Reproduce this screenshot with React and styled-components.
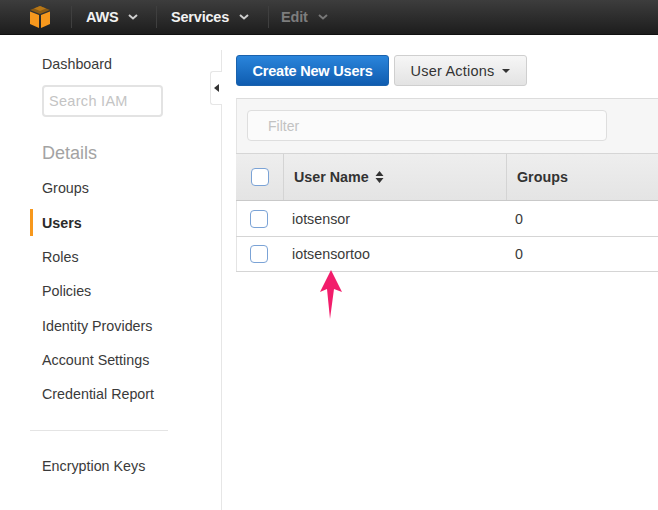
import React from "react";
import styled, { createGlobalStyle } from "styled-components";

const Global = createGlobalStyle`
  html, body { margin: 0; padding: 0; background: #fff; }
  body { font-family: "Liberation Sans", Arial, sans-serif; color: #333; overflow: hidden; }
`;

const Page = styled.div`
  width: 658px;
  height: 510px;
  overflow: hidden;
  display: flex;
  flex-direction: column;
`;

const TopBar = styled.header`
  height: 35px;
  flex: none;
  box-sizing: border-box;
  border-bottom: 1px solid #111;
  background: linear-gradient(#3d3d3d, #1d1d1d);
  display: flex;
  align-items: center;
  padding-left: 29px;
`;

const LogoBox = styled.div`
  width: 42px;
  display: flex;
  align-items: center;
`;

const Menu = styled.div`
  height: 22px;
  display: flex;
  align-items: center;
  gap: 10px;
  box-sizing: border-box;
  width: ${(p) => p.$w}px;
  padding-left: ${(p) => p.$pad}px;
  border-left: 1px solid #3f3f3f;
  font-size: 14.5px;
  font-weight: bold;
  letter-spacing: -0.2px;
  color: ${(p) => (p.$off ? "#7d7d7d" : "#f2f2f2")};
  svg { flex: none; }
`;

const Body = styled.div`
  flex: 1;
  display: flex;
  min-height: 0;
`;

const Side = styled.nav`
  width: 222px;
  flex: none;
  box-sizing: border-box;
  margin-top: 15px;
  border-right: 1px solid #e6e6e6;
  padding: 0 0 0 30px;
  position: relative;
`;

const Toggle = styled.div`
  position: absolute;
  right: -1px;
  top: 21px;
  width: 12px;
  height: 34px;
  box-sizing: border-box;
  background: #fff;
  border: 1px solid #e6e6e6;
  border-right: none;
  border-radius: 3px 0 0 3px;
  display: flex;
  align-items: center;
  justify-content: center;
  &::before {
    content: "";
    border-style: solid;
    border-width: 4px 5px 4px 0;
    border-color: transparent #333 transparent transparent;
  }
`;

const Item = styled.a`
  display: flex;
  align-items: center;
  height: 27px;
  margin-top: ${(p) => p.$top || 0}px;
  padding-left: ${(p) => (p.$active ? 9 : 12)}px;
  border-left: ${(p) => (p.$active ? "3px solid #f7981d" : "none")};
  font-size: 14.3px;
  font-weight: ${(p) => (p.$active ? "bold" : "normal")};
  color: ${(p) => (p.$active ? "#2b2b2b" : "#3a3a3a")};
`;

const SearchBox = styled.div`
  width: 121px;
  height: 32px;
  box-sizing: border-box;
  margin: 8px 0 0 12px;
  border: 2px solid #e3e3e3;
  border-radius: 4px;
  padding-left: 5px;
  display: flex;
  align-items: center;
  font-size: 14.5px;
  letter-spacing: 0.3px;
  color: #c4c4c4;
`;

const SideTitle = styled.div`
  margin: 24px 0 0 12px;
  height: 24px;
  line-height: 24px;
  font-size: 18px;
  color: #a3a3a3;
`;

const Divider = styled.hr`
  width: 138px;
  margin: 22px 0 22px;
  border: none;
  border-top: 1px solid #e4e4e4;
`;

const Main = styled.main`
  flex: 1;
  min-width: 0;
  padding: 20px 0 0 14px;
  position: relative;
`;

const Actions = styled.div`
  display: flex;
  gap: 5px;
  height: 31px;
`;

const Button = styled.button`
  height: 31px;
  width: ${(p) => p.$w}px;
  box-sizing: border-box;
  padding: 0;
  border-radius: 3px;
  font-family: inherit;
  font-size: 14.5px;
  display: flex;
  align-items: center;
  justify-content: center;
  gap: 8px;
  font-weight: ${(p) => (p.$primary ? "bold" : "normal")};
  letter-spacing: ${(p) => (p.$primary ? "-0.2px" : "0.2px")};
  color: ${(p) => (p.$primary ? "#fff" : "#333")};
  background: ${(p) =>
    p.$primary ? "linear-gradient(#2a85db, #0f5cb0)" : "linear-gradient(#f6f6f6, #e3e3e3)"};
  border: 1px solid ${(p) => (p.$primary ? "#1a62ad" : "#cfcfcf")};
  &::after {
    content: ${(p) => (p.$caret ? '""' : "none")};
    border-style: solid;
    border-width: 4px 4px 0;
    border-color: #333 transparent transparent;
  }
`;

const Panel = styled.section`
  margin-top: 12px;
  border-top: 1px solid #dcdcdc;
  border-left: 1px solid #e4e4e4;
`;

const FilterBar = styled.div`
  height: 54px;
  box-sizing: border-box;
  background: #f6f6f6;
  padding: 11px 0 0 10px;
`;

const FilterInput = styled.div`
  width: 360px;
  height: 31px;
  box-sizing: border-box;
  background: #fbfbfb;
  border: 1px solid #dedede;
  border-radius: 4px;
  padding-left: 20px;
  display: flex;
  align-items: center;
  font-size: 14px;
  color: #c2c2c2;
`;

const HeadRow = styled.div`
  height: 48px;
  box-sizing: border-box;
  display: flex;
  background: linear-gradient(#eeeeee, #e4e4e4);
  border-top: 1px solid #d6d6d6;
  border-bottom: 1px solid #c9c9c9;
  margin-left: -1px;
`;

const HeadCell = styled.div`
  width: ${(p) => p.$w}px;
  flex: none;
  box-sizing: border-box;
  border-right: ${(p) => (p.$last ? "none" : "1px solid #d4d4d4")};
  padding-left: ${(p) => p.$pad}px;
  display: flex;
  align-items: center;
  gap: 6px;
  font-size: 14.3px;
  font-weight: bold;
  color: #333;
`;

const Row = styled.div`
  height: ${(p) => p.$h}px;
  box-sizing: border-box;
  display: flex;
  align-items: center;
  border-bottom: 1px solid #d5d5d5;
  margin-left: -1px;
  font-size: 14.3px;
  color: #3a3a3a;
`;

const CheckCell = styled.div`
  width: 56px;
  flex: none;
  padding-left: 14px;
  box-sizing: border-box;
`;

const NameCell = styled.div`
  width: 223px;
  flex: none;
`;

const Check = styled.span`
  display: block;
  width: 18px;
  height: 18px;
  box-sizing: border-box;
  border: 1.5px solid #7ba3d6;
  border-radius: 4px;
  background: #fff;
`;

const Arrow = styled.svg`
  position: absolute;
  left: 98px;
  top: 235px;
`;

const Chevron = ({ color = "#cfcfcf" }) => (
  <svg width="10" height="6" viewBox="0 0 10 6">
    <path d="M1 1l4 3.5L9 1" fill="none" stroke={color} strokeWidth="2" />
  </svg>
);

const Logo = () => (
  <svg width="22" height="24" viewBox="0 0 22 24">
    <path d="M11 1l10 4-10 4L1 5z" fill="#8a5a14" />
    <path d="M1 6.500l9 3.500v13l-9-4z" fill="#f7981d" />
    <path d="M21 6.500l-9 3.500v13l9-4z" fill="#f7981d" />
    <path d="M5 3.500l6-2.500 6 2.500-6 2.500z" fill="#b87716" />
  </svg>
);

const SortIcon = () => (
  <svg width="9" height="12" viewBox="0 0 9 12">
    <path d="M4.500 0l4 5h-8zM4.500 12l-4-5h8z" fill="#333" />
  </svg>
);

const navTop = ["Groups"];
const navRest = ["Roles", "Policies", "Identity Providers", "Account Settings", "Credential Report"];

const users = [
  { name: "iotsensor", groups: 0, h: 36 },
  { name: "iotsensortoo", groups: 0, h: 35 },
];

const App = () => (
  <Page>
    <Global />
    <TopBar>
      <LogoBox>
        <Logo />
      </LogoBox>
      <Menu $w={85} $pad={14}>
        AWS <Chevron />
      </Menu>
      <Menu $w={112} $pad={14}>
        Services <Chevron />
      </Menu>
      <Menu $w={70} $pad={12} $off>
        Edit <Chevron color="#777" />
      </Menu>
    </TopBar>
    <Body>
      <Side>
        <Toggle />
        <Item>Dashboard</Item>
        <SearchBox>Search IAM</SearchBox>
        <SideTitle>Details</SideTitle>
        {navTop.map((n) => (
          <Item key={n} $top={9}>
            {n}
          </Item>
        ))}
        <Item $active $top={8}>
          Users
        </Item>
        {navRest.map((n) => (
          <Item key={n} $top={7.4}>
            {n}
          </Item>
        ))}
        <Divider />
        <Item>Encryption Keys</Item>
      </Side>
      <Main>
        <Actions>
          <Button $primary $w={153}>
            Create New Users
          </Button>
          <Button $w={133} $caret>
            User Actions
          </Button>
        </Actions>
        <Panel>
          <FilterBar>
            <FilterInput>Filter</FilterInput>
          </FilterBar>
          <HeadRow>
            <HeadCell $w={48} $pad={15}>
              <Check />
            </HeadCell>
            <HeadCell $w={223} $pad={10}>
              User Name <SortIcon />
            </HeadCell>
            <HeadCell $w={151} $pad={10} $last>
              Groups
            </HeadCell>
          </HeadRow>
          {users.map((u) => (
            <Row key={u.name} $h={u.h}>
              <CheckCell>
                <Check />
              </CheckCell>
              <NameCell>{u.name}</NameCell>
              <div>{u.groups}</div>
            </Row>
          ))}
        </Panel>
        <Arrow width="24" height="50" viewBox="0 0 24 50">
          <path d="M11 0L22 22 L14 19 L10 49 L7 19 L0 22z" fill="#f21d6b" />
        </Arrow>
      </Main>
    </Body>
  </Page>
);

export default App;
